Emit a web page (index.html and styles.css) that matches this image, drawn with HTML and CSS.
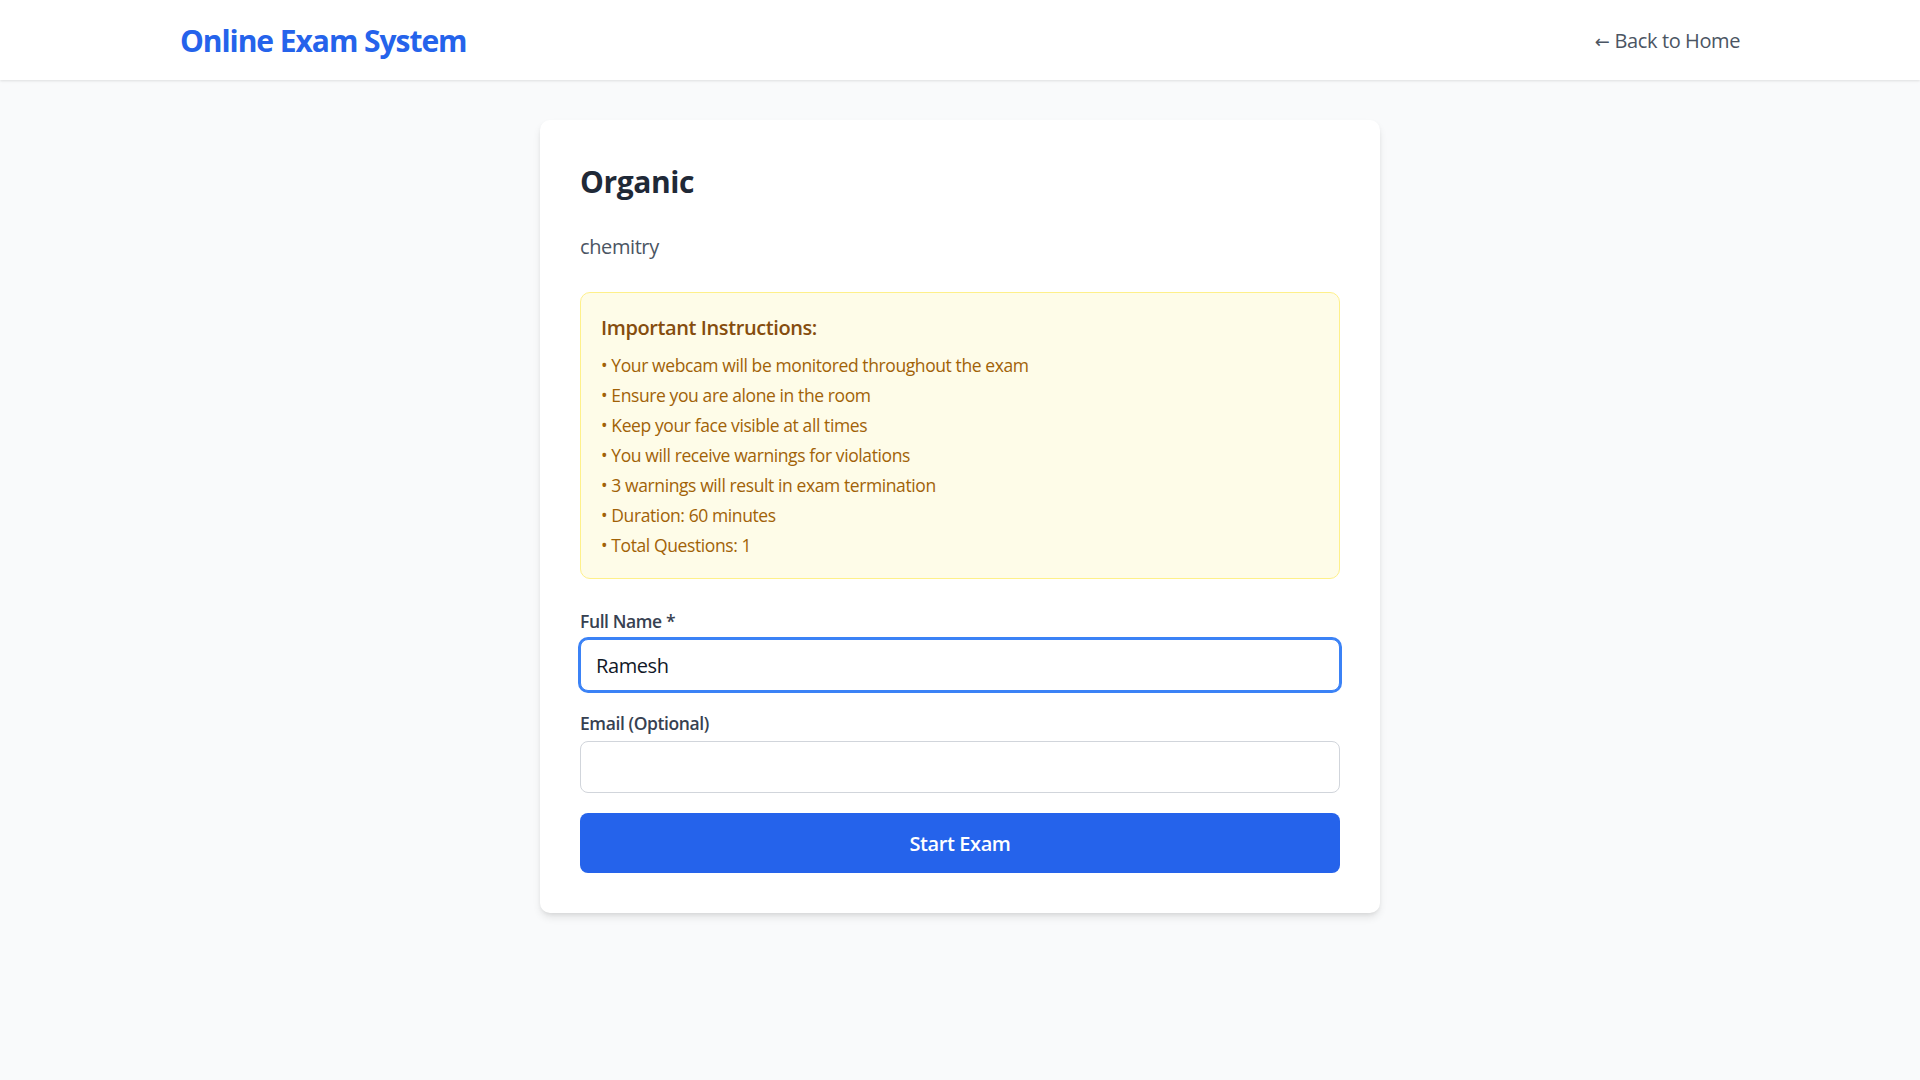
FILE: index.html
```html
<!DOCTYPE html>
<html lang="en">
<head>
<meta charset="utf-8">
<title>Online Exam System</title>
<link rel="stylesheet" href="styles.css">
</head>
<body>
<header class="site-header">
  <div class="container header-inner">
    <a class="brand" href="#">Online Exam System</a>
    <a class="back-link" href="#"><span class="arrow">←</span> Back to Home</a>
  </div>
</header>
<main class="page">
  <div class="card">
    <h1 class="exam-title">Organic</h1>
    <p class="exam-desc">chemitry</p>
    <div class="notice">
      <h3 class="notice-title">Important Instructions:</h3>
      <ul class="notice-list">
        <li>• Your webcam will be monitored throughout the exam</li>
        <li>• Ensure you are alone in the room</li>
        <li>• Keep your face visible at all times</li>
        <li>• You will receive warnings for violations</li>
        <li>• 3 warnings will result in exam termination</li>
        <li>• Duration: 60 minutes</li>
        <li>• Total Questions: 1</li>
      </ul>
    </div>
    <form class="start-form">
      <div class="field">
        <label class="field-label" for="name">Full Name *</label>
        <input class="field-input is-focused" id="name" type="text" value="Ramesh">
      </div>
      <div class="field">
        <label class="field-label" for="email">Email (Optional)</label>
        <input class="field-input" id="email" type="email">
      </div>
      <button class="start-btn" type="button">Start Exam</button>
    </form>
  </div>
</main>
</body>
</html>
```

FILE: styles.css
```css
* { box-sizing: border-box; }
html, body { margin: 0; padding: 0; }
body {
  font-family: "Segoe UI", "Open Sans", sans-serif;
  background: #f9fafb;
  min-height: 100vh;
  color: #1f2937;
  letter-spacing: -0.025em;
}
a { text-decoration: none; }

.site-header {
  background: #ffffff;
  height: 80px;
  box-shadow: 0 1px 3px rgba(0,0,0,0.08), 0 1px 2px rgba(0,0,0,0.04);
  position: relative;
}
.container {
  max-width: 1600px;
  margin: 0 auto;
  padding: 0 20px;
}
.header-inner {
  height: 100%;
  padding-top: 2px;
  display: flex;
  align-items: center;
  justify-content: space-between;
}
.brand {
  color: #2563eb;
  font-size: 30px;
  line-height: 40px;
  font-weight: 700;
  letter-spacing: -0.035em;
}
.back-link {
  color: #4b5563;
  font-size: 20px;
  line-height: 30px;
}
.arrow {
  font-family: "DejaVu Sans", sans-serif;
  font-size: 18px;
  letter-spacing: 0;
}

.page {
  padding: 40px 20px;
}
.card {
  max-width: 840px;
  margin: 0 auto;
  background: #ffffff;
  border-radius: 10px;
  padding: 42px 40px 40px;
  box-shadow: 0 5px 8px -1px rgba(0,0,0,0.1), 0 2px 5px -2px rgba(0,0,0,0.1);
}
.exam-title {
  margin: 0 0 30px;
  font-size: 30px;
  line-height: 40px;
  font-weight: 700;
  color: #1f2937;
}
.exam-desc {
  margin: 0 0 30px;
  font-size: 20px;
  line-height: 30px;
  color: #4b5563;
}
.notice {
  background: #fefce8;
  border: 1px solid #fef08a;
  border-radius: 10px;
  padding: 20px;
  margin-bottom: 30px;
}
.notice-title {
  margin: 0 0 10px;
  font-size: 20px;
  line-height: 30px;
  font-weight: 600;
  color: #854d0e;
}
.notice-list {
  list-style: none;
  margin: 0;
  padding: 0;
  display: flex;
  flex-direction: column;
  gap: 5px;
}
.notice-list li {
  font-size: 17.5px;
  line-height: 25px;
  color: #a16207;
}

.start-form {
  display: flex;
  flex-direction: column;
  gap: 20px;
}
.field { display: flex; flex-direction: column; }
.field-label {
  font-size: 17.5px;
  line-height: 25px;
  font-weight: 600;
  color: #374151;
  margin-bottom: 5px;
}
.field-input {
  font-family: inherit;
  letter-spacing: inherit;
  font-size: 20px;
  line-height: 30px;
  height: 52px;
  padding: 10px 15px;
  border: 1px solid #d1d5db;
  border-radius: 8px;
  color: #111827;
  background: #ffffff;
  outline: none;
}
.field-input.is-focused {
  border-color: #3b82f6;
  box-shadow: 0 0 0 2px #3b82f6;
}
.start-btn {
  font-family: inherit;
  letter-spacing: inherit;
  height: 60px;
  border: none;
  border-radius: 8px;
  background: #2563eb;
  color: #ffffff;
  font-size: 20px;
  font-weight: 600;
  cursor: pointer;
}
```
